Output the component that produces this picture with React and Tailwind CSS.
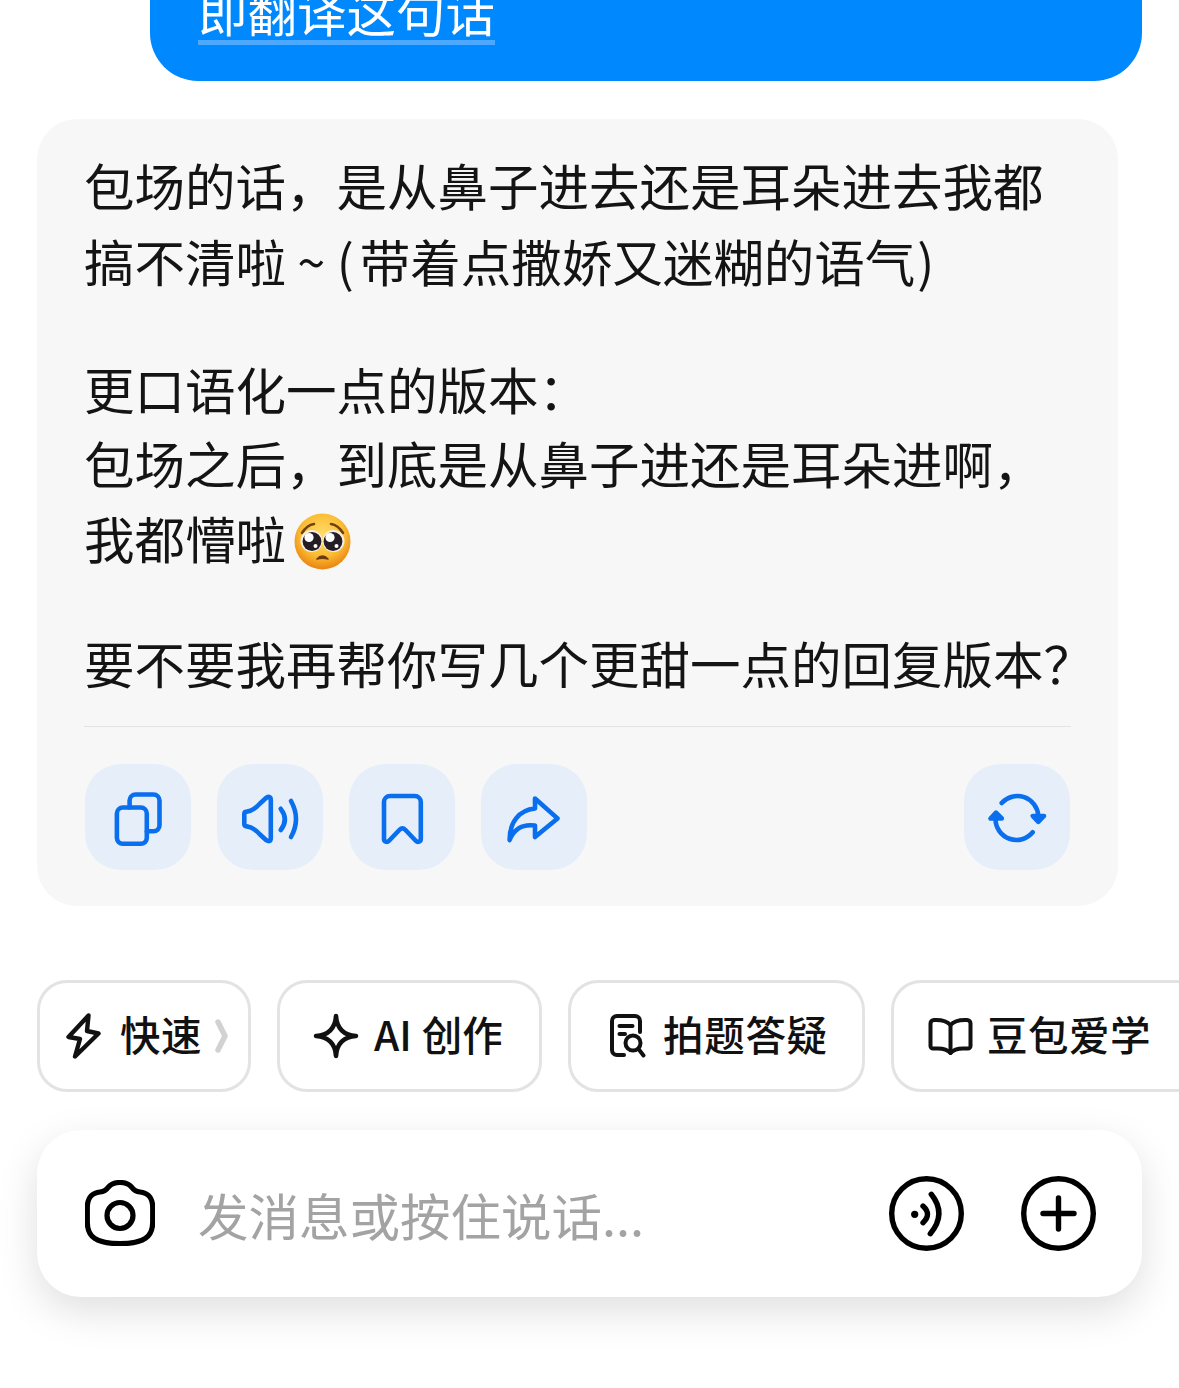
import React from "react";

const Action = ({ children, className = "" }) => (
  <button className={`w-[106px] h-[106px] shrink-0 rounded-[36px] bg-[#e6eff9] ${className}`}>
    <svg viewBox="0 0 106 106" className="block w-[106px] h-[106px]" fill="none" stroke="#0a6fee" strokeWidth="4.6" strokeLinecap="round" strokeLinejoin="round">
      {children}
    </svg>
  </button>
);

const Emoji = () => (
  <svg viewBox="0 0 57 57" className="inline-block w-[57px] h-[57px] align-middle ml-[8px] mt-[-8px]">
    <defs>
      <radialGradient id="face" cx="50%" cy="38%" r="62%">
        <stop offset="0%" stopColor="#ffdc6a" />
        <stop offset="62%" stopColor="#fbbd35" />
        <stop offset="100%" stopColor="#e9830f" />
      </radialGradient>
    </defs>
    <circle cx="28.5" cy="28.5" r="28" fill="url(#face)" />
    <path d="M8 20 Q13 12 20 11" fill="none" stroke="#6e4110" strokeWidth="2.6" strokeLinecap="round" />
    <path d="M49 20 Q44 12 37 11" fill="none" stroke="#6e4110" strokeWidth="2.6" strokeLinecap="round" />
    <circle cx="17.5" cy="28" r="11" fill="#f6efe6" />
    <circle cx="39.5" cy="28" r="11" fill="#f6efe6" />
    <circle cx="18" cy="28.5" r="9.4" fill="#241d26" />
    <circle cx="39" cy="28.5" r="9.4" fill="#241d26" />
    <circle cx="15" cy="24.5" r="4.6" fill="#fff" />
    <circle cx="36" cy="24.5" r="4.6" fill="#fff" />
    <circle cx="21.5" cy="33" r="2" fill="#fff" />
    <circle cx="42.5" cy="33" r="2" fill="#fff" />
    <path d="M23 46 Q28.5 40 34 46 Q28.5 44.5 23 46 Z" fill="#6b3a10" stroke="#6b3a10" strokeWidth="1.6" strokeLinejoin="round" />
  </svg>
);

const Chip = ({ className, children }) => (
  <div className={`h-[112px] shrink-0 flex items-center rounded-[30px] border-[3px] border-[#e3e3e3] bg-white text-[40.5px] font-medium leading-none text-[#111] ${className}`}>
    {children}
  </div>
);

export default function App() {
  return (
    <div className="w-[1179px] h-[1388px] overflow-hidden bg-white font-['Noto_Sans_CJK_SC','Noto_Sans',sans-serif] text-[#141414]">
      <div className="ml-[150px] w-[992px] h-[81px] overflow-hidden rounded-b-[48px] bg-[#0088ff] flex flex-col justify-end pl-[48px] pb-[36px] text-white">
        <span className="self-start text-[49.5px] leading-[58px] border-b-[5px] border-[#4da9ff]">即翻译这句话</span>
      </div>

      <div className="ml-[37px] mt-[38px] w-[1081px] h-[787px] rounded-[40px] bg-[#f7f7f7] px-[48px] pt-[27px] pb-[36px] text-[50.5px] leading-[76px]">
        <div className="-ml-px">
          <p className="whitespace-nowrap">包场的话，是从鼻子进去还是耳朵进去我都</p>
          <p className="whitespace-nowrap">搞不清啦 ~ <span className="mr-[6px]">(</span>带着点撒娇又迷糊的语气<span className="ml-[2px]">)</span></p>
          <p className="whitespace-nowrap mt-[52px]">更口语化一点的版本：</p>
          <p className="whitespace-nowrap mt-[-2px]">包场之后，到底是从鼻子进还是耳朵进啊，</p>
          <p className="whitespace-nowrap mt-[-1px]">我都懵啦<Emoji /></p>
          <p className="whitespace-nowrap mt-[49px]">要不要我再帮你写几个更甜一点的回复版本？</p>
        </div>
        <div className="mt-[26px] -mx-px h-px bg-[#e3e3e3]" />
        <div className="mt-[37px] flex gap-[26px]">
          <Action>
            <rect x="31.9" y="43.5" width="29.9" height="36.3" rx="6" />
            <path d="M44.6 43.5V36.5a6 6 0 0 1 6-6H68.5a6 6 0 0 1 6 6V61.3a6 6 0 0 1-6 6H61.8" />
          </Action>
          <Action>
            <path d="M27.3 50Q27.3 47.8 29.8 47.6C35 47 39 44 43 39.5L49 34Q53.8 31 53.8 36V74Q53.8 79 49 76L43 70.5C39 66 35 63 29.8 62.4Q27.3 62.2 27.3 60Z" />
            <path d="M63.7 44.8Q72 55.4 63.7 66" />
            <path d="M74 37Q84 55 74 73" />
          </Action>
          <Action>
            <path d="M35 38a6 6 0 0 1 6-6H65.8a6 6 0 0 1 6 6V75a2.8 2.8 0 0 1-4.8 2L56 65.5a3.6 3.6 0 0 0-5.2 0L39.8 77a2.8 2.8 0 0 1-4.8-2Z" />
          </Action>
          <Action>
            <path d="M54 34.5L76.5 54.4L54 73V61.5C42 60 33 65 28.6 76C28.6 58 38 46 54 44.5Z" />
          </Action>
          <Action className="ml-auto">
            <path d="M37.7 39A21 21 0 0 1 74.3 51.7" />
            <path d="M68.7 68.3A21 21 0 0 1 31.5 55" />
            <path d="M68.7 52H80L74.3 57.8Z" fill="#0a6fee" />
            <path d="M26.5 54.5H37.8L32 48.7Z" fill="#0a6fee" />
          </Action>
        </div>
      </div>

      <div className="mt-[74px] pl-[37px] flex gap-[26px]">
        <Chip className="w-[214px] pl-[26px]">
          <svg viewBox="0 0 35 46" className="w-[35px] h-[46px] shrink-0" fill="none" stroke="#111" strokeWidth="4.4" strokeLinejoin="round" strokeLinecap="round">
            <path d="M22.5 2.5L2.5 24L14 26L9 43.5L32.5 20.5L21 18Z" />
          </svg>
          <span className="ml-[19px] mt-[-4px] tracking-[0.6px]">快速</span>
          <svg viewBox="0 0 13 34" className="ml-[13px] w-[13px] h-[34px] shrink-0" fill="none" stroke="#d2d2d2" strokeWidth="5.5" strokeLinecap="round" strokeLinejoin="round">
            <path d="M3 3L10 17L3 31" />
          </svg>
        </Chip>
        <Chip className="w-[265px] pl-[33px]">
          <svg viewBox="0 0 46 46" className="w-[46px] h-[46px] shrink-0" fill="none" stroke="#111" strokeWidth="4.6" strokeLinejoin="round">
            <path d="M23 3C23.5 15 31 22.5 43 23C31 23.5 23.5 31 23 43C22.5 31 15 23.5 3 23C15 22.5 22.5 15 23 3Z" />
          </svg>
          <span className="ml-[15px] mt-[-4px] whitespace-nowrap">AI<span className="ml-[10px]">创作</span></span>
        </Chip>
        <Chip className="w-[297px] pl-[39px]">
          <svg viewBox="0 0 36 44" className="w-[36px] h-[44px] shrink-0" fill="none" stroke="#111" strokeWidth="4" strokeLinecap="round" strokeLinejoin="round">
            <path d="M30 18V7a5 5 0 0 0-5-5H7a5 5 0 0 0-5 5V36a5 5 0 0 0 5 5H14" />
            <path d="M9.5 12H22.5" />
            <path d="M9.5 20H15" />
            <circle cx="23" cy="29" r="7.5" />
            <path d="M28.5 35L33.5 41.5" />
          </svg>
          <span className="ml-[17px] mt-[-4px] whitespace-nowrap tracking-[0.7px]">拍题答疑</span>
        </Chip>
        <Chip className="w-[320px] pl-[34px]">
          <svg viewBox="0 0 45 37" className="w-[45px] h-[37px] shrink-0" fill="none" stroke="#111" strokeWidth="4" strokeLinecap="round" strokeLinejoin="round">
            <path d="M22.5 7C19 3 14 2 8 2H6a3.5 3.5 0 0 0-3.5 3.5V28a2.5 2.5 0 0 0 2.5 2.5H10C15 30.5 19 31 22.5 35C26 31 30 30.5 35 30.5H40a2.5 2.5 0 0 0 2.5-2.5V5.5A3.5 3.5 0 0 0 39 2H37C31 2 26 3 22.5 7Z" />
            <path d="M22.5 7V35" />
          </svg>
          <span className="ml-[14px] mt-[-4px] whitespace-nowrap tracking-[0.5px]">豆包爱学</span>
        </Chip>
      </div>

      <div className="ml-[37px] mt-[38px] w-[1105px] h-[167px] rounded-[44px] bg-white shadow-[0_14px_40px_rgba(0,0,0,0.13)] flex items-center pl-[48px] pr-[46px]">
        <svg viewBox="0 0 70 66" className="w-[70px] h-[66px] shrink-0 mt-[-2px]" fill="none" stroke="#000" strokeWidth="5.2" strokeLinejoin="round">
          <path d="M35 2.5C41 2.5 44 4 46.5 7C49 10.5 51 11.5 55 12C63 13 67.7 17 67.7 28V42C67.7 57 59 63.7 35 63.7C11 63.7 2.3 57 2.3 42V28C2.3 17 7 13 15 12C19 11.5 21 10.5 23.5 7C26 4 29 2.5 35 2.5Z" />
          <circle cx="35" cy="35.5" r="13" />
        </svg>
        <span className="ml-[43px] mt-[2px] text-[50.5px] leading-none text-[#a3a3a3] whitespace-nowrap">发消息或按住说话...</span>
        <svg viewBox="0 0 75 75" className="ml-auto w-[75px] h-[75px] shrink-0 mt-[-1px]" fill="none" stroke="#000" strokeWidth="5.4" strokeLinecap="round">
          <circle cx="37.5" cy="37.5" r="34.8" />
          <circle cx="25.7" cy="38.3" r="3.6" fill="#000" stroke="none" />
          <path d="M34 30Q43 38.3 34 46.7" />
          <path d="M42.3 18.3Q58 38 41.3 57.7" />
        </svg>
        <svg viewBox="0 0 75 75" className="ml-[57px] w-[75px] h-[75px] shrink-0 mt-[-1px]" fill="none" stroke="#000" strokeWidth="5.4" strokeLinecap="round">
          <circle cx="37.5" cy="37.5" r="34.8" />
          <path d="M22 37.5H53" />
          <path d="M37.5 22V53" />
        </svg>
      </div>
    </div>
  );
}
